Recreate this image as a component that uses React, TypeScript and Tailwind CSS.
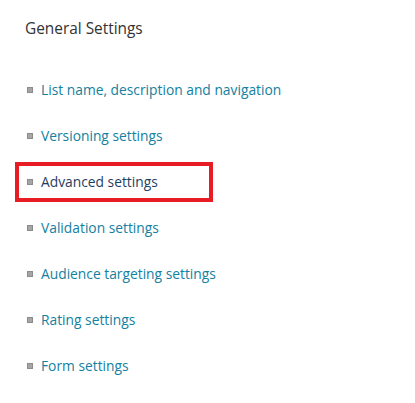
import React from "react";

const items = [
  "List name, description and navigation",
  "Versioning settings",
  "Advanced settings",
  "Validation settings",
  "Audience targeting settings",
  "Rating settings",
  "Form settings",
];

export default function App() {
  return (
    <div
      className="w-[415px] h-[403px] bg-white pt-[19px]"
      style={{ fontFamily: '"Open Sans", "Noto Sans", sans-serif' }}
    >
      <div className="pl-[25px] text-[15.4px] leading-[20px] text-[#333333]">General Settings</div>
      <ul className="mt-[28px] pl-[27px]">
        {items.map((t) => {
          const active = t === "Advanced settings";
          return (
            <li key={t} className="relative flex items-center h-[46px] gap-[8px]">
              <span className="w-[6px] h-[6px] bg-[#a6a6a6] border border-[#8a8a8a] shrink-0" />
              <span
                className={
                  "text-[13.8px] leading-[20px] " + (active ? "text-[#1f3f5f]" : "text-[#13819f]")
                }
              >
                {t}
              </span>
              {active && (
                <span className="absolute left-[-12px] top-[3px] w-[198px] h-[40px] border-[4px] border-[#e81c24]" />
              )}
            </li>
          );
        })}
      </ul>
    </div>
  );
}
